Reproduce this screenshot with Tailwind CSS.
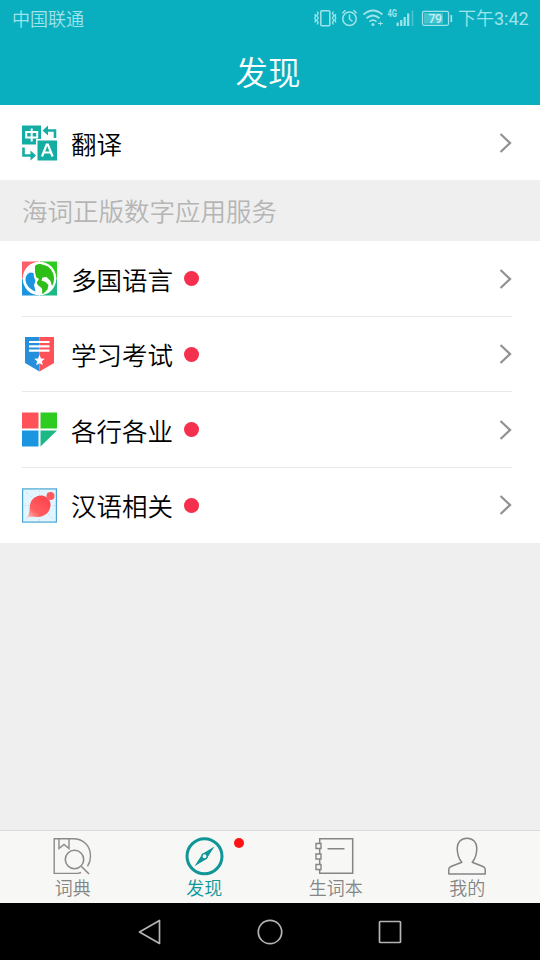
<!DOCTYPE html>
<html lang="zh-CN">
<head>
<meta charset="utf-8">
<title>发现</title>
<script src="https://cdn.jsdelivr.net/npm/@tailwindcss/browser@4"></script>
</head>
<body class="w-[540px] h-[960px] overflow-hidden flex flex-col bg-[#efefef] font-['Noto_Sans_CJK_SC',sans-serif] font-[350] text-black">
<header class="h-[105px] shrink-0 bg-[#09afbf] flex flex-col">
  <div class="h-[37px] flex items-center justify-between pl-3 pr-3 text-[#a1e3ea]">
    <span class="text-[18px] leading-[34px] pb-[2px]">中国联通</span>
    <div class="flex items-center">
      <svg class="w-[142px] h-[37px] mr-[2px]" viewBox="0 0 142 37" fill="none" stroke="currentColor" stroke-width="1.5">
        <rect x="6.8" y="10.800" width="9" height="15" rx="1"/>
        <path d="M3.200 11.500l1 2-1.500 2 1.500 2.500-1.500 2.500 1.500 2-1 2M.8 14l.8 2-.8 2 .8 2-.8 2.500M19.400 11.500l-1 2 1.500 2-1.500 2.500 1.500 2.500-1.500 2 1 2M21.800 14l-.8 2 .8 2-.8 2 .8 2.500" stroke-width="1.300"/>
        <circle cx="35.500" cy="18.800" r="6.700"/><path d="M35.500 14.500v4.500l3 2.500M28.300 13.200l3.200-3M42.700 13.200l-3.200-3"/>
        <path d="M49.500 14.500q9.500-8 19 0M52.500 18.200q6.500-5.500 13 0M55.500 21.600q3.500-3 7 0" stroke-width="1.800"/>
        <circle cx="59" cy="24.500" r="1.500" fill="currentColor" stroke="none"/>
        <path d="M64 23.500h4.800M66.400 21.500v4" stroke-width="1"/>
        <text x="73.500" y="17" textLength="9.500" lengthAdjust="spacingAndGlyphs" font-family="Roboto" font-size="10" font-weight="700" fill="currentColor" stroke="none">4G</text>
        <path d="M83.700 22.500v3.500M87.200 20v6M90.700 17v9M94.200 13.500v12.500" stroke-width="2.200"/>
        <path d="M98.500 10.500v15.500" stroke-width="1.500" opacity=".45"/>
        <rect x="108.500" y="11.300" width="26" height="14" rx="1.500" stroke-width="1.200"/>
        <rect x="110" y="13" width="19" height="10.600" fill="currentColor" stroke="none" opacity=".4"/>
        <text x="114.500" y="23" textLength="13.500" font-family="Roboto" font-size="12.500" font-weight="500" fill="#c6f1f4" stroke="none">79</text>
        <path d="M137.300 15v7" stroke-width="1.700"/>
      </svg>
      <span class="text-[18px] leading-[34px] pb-[2px] whitespace-nowrap w-[70px]">下午<span class="font-[Roboto] font-normal">3:42</span></span>
    </div>
  </div>
  <h1 class="text-center text-white text-[32.500px] leading-[68px] pr-1">发现</h1>
</header>

<main class="flex-1 text-[25.500px]">
  <div class="h-[75px] bg-white flex items-center pl-[22px] pr-7">
    <svg class="w-[35px] h-[36px] mr-[14px]" viewBox="0 0 35 36">
      <path fill="#14ada4" d="M0 .5h19v13.500H14V19.500H0zM15.500 15.500H35V35.500H15.500z"/>
      <path d="M9.700 3.500v13M4.200 7h11v5.500h-11z" fill="none" stroke="#fff" stroke-width="2"/>
      <path d="M22.500 5.500h10.500v7.500M1.500 22.500v8h9" fill="none" stroke="#14ada4" stroke-width="2.600"/>
      <path fill="#14ada4" d="M20.500 5.500l5.500-5v10zM14 30.500l-5.500-5v10z"/>
      <path d="M20 31.500l4.700-12h1.200l4.700 12M21.800 27.500h7" fill="none" stroke="#fff" stroke-width="2.200"/>
    </svg>
    <span class="leading-[38px]">翻译</span>
    <svg class="w-3 h-5 ml-auto" viewBox="0 0 12 20" fill="none" stroke="#919191" stroke-width="2.300"><path d="M.5 1L10 10 .5 19"/></svg>
  </div>
  <h2 class="h-[61px] pl-[22px] leading-[60px] text-[#b5b5b5]">海词正版数字应用服务</h2>
  <div class="bg-white pl-[22px] pr-7 h-[302px]">
    <div class="h-[76px] flex items-center border-b border-[#e9e9e9]">
      <svg class="w-[35px] h-[35px] mr-[14px]" viewBox="0 0 35 35">
        <path fill="#ff5f68" d="M0 .5h17v17H0z"/><path fill="#2ecb20" d="M18 .5h17v17H18z"/><path fill="#1b95df" d="M0 18h17v16.500H0z"/><path fill="#1cb987" d="M18 18h17v16.500H18z"/>
        <circle cx="17.500" cy="17.500" r="16.800" fill="#fff"/>
        <path fill="#2dbf18" d="M13 5c2-2 5-2.500 7-1.500l5 1.500c4 2.500 7 7 7 12.500 0 3-.5 5-2 7.500l-1.500-5-4-4-4 .5-1 3 4 1.500 3 3-1 4.500-4 4-1 .5c-1-2 .5-4-1-6-2-2-5-3-4.500-6l2-3-3-2-1-5z"/>
        <path fill="#1b95df" d="M8 11.500l3.500.5.500 4 1.500 4-1.500 4 1.500 6.500C8 28.500 4 24 3.500 19c-.3-3.500 1.500-6 4.500-7.500z"/>
      </svg>
      <span class="leading-[38px]">多国语言</span><i class="size-[15px] rounded-full bg-[#f52f4e] ml-[11px]"></i>
      <svg class="w-3 h-5 ml-auto" viewBox="0 0 12 20" fill="none" stroke="#919191" stroke-width="2.300"><path d="M.5 1L10 10 .5 19"/></svg>
    </div>
    <div class="h-[75px] flex items-center border-b border-[#e9e9e9]">
      <svg class="w-[35px] h-[35px] mr-[14px]" viewBox="0 0 35 35">
        <path fill="#268fdb" d="M3 0h14.500v34.500L3 26z"/><path fill="#ff5158" d="M17.500 0H32v26l-14.500 8.500z"/>
        <path d="M7 5h20.500M7 9.300h20.500M7 13.600h20.500" stroke="#fff" stroke-width="2.200"/>
        <path fill="#fff" d="M17.500 17.800l1.500 3.600 3.800.4-2.900 2.500.9 3.900-3.300-2-3.300 2 .9-3.900-2.900-2.500 3.800-.4z"/>
      </svg>
      <span class="leading-[38px]">学习考试</span><i class="size-[15px] rounded-full bg-[#f52f4e] ml-[11px]"></i>
      <svg class="w-3 h-5 ml-auto" viewBox="0 0 12 20" fill="none" stroke="#919191" stroke-width="2.300"><path d="M.5 1L10 10 .5 19"/></svg>
    </div>
    <div class="h-[76px] flex items-center border-b border-[#e9e9e9]">
      <svg class="w-[35px] h-[35px] mr-[14px]" viewBox="0 0 35 35">
        <path fill="#ff5158" d="M0 .5h16.500v16H0z"/><path fill="#2ecb20" d="M18.500.5H35v16H18.500z"/><path fill="#1b95df" d="M0 18.500h16.500v16H0z"/><path fill="#1cb987" d="M18.500 18.500H35l-16.500 16z"/>
      </svg>
      <span class="leading-[38px]">各行各业</span><i class="size-[15px] rounded-full bg-[#f52f4e] ml-[11px]"></i>
      <svg class="w-3 h-5 ml-auto" viewBox="0 0 12 20" fill="none" stroke="#919191" stroke-width="2.300"><path d="M.5 1L10 10 .5 19"/></svg>
    </div>
    <div class="h-[74px] flex items-center">
      <svg class="w-[35px] h-[35px] mr-[14px]" viewBox="0 0 35 35">
        <defs><linearGradient id="comet" x1="0" y1="1" x2=".7" y2=".2"><stop offset="0" stop-color="#ffb7b4"/><stop offset=".4" stop-color="#ff5f61"/><stop offset="1" stop-color="#ff4950"/></linearGradient></defs>
        <rect x=".6" y=".9" width="33.800" height="33.200" fill="#e2f4fd" stroke="#4aa5d3" stroke-width="1.200"/>
        <path d="M17.500 1v32M1 17.500h33M4 4l27 27M4 31L31 4" stroke="#b9e0f2" stroke-width=".8" stroke-dasharray="3 2"/>
        <path fill="url(#comet)" d="M5.500 29c3-5 1.500-9 3-14 2-5.500 8-8.500 13.500-7 6 2 8 8 5.500 13.500-2 5-8 8-13 7.500-3-.3-6-.5-9 0z"/>
        <circle cx="28.500" cy="8" r="4" fill="#ff585d"/>
      </svg>
      <span class="leading-[38px]">汉语相关</span><i class="size-[15px] rounded-full bg-[#f52f4e] ml-[11px]"></i>
      <svg class="w-3 h-5 ml-auto" viewBox="0 0 12 20" fill="none" stroke="#919191" stroke-width="2.300"><path d="M.5 1L10 10 .5 19"/></svg>
    </div>
  </div>
</main>

<nav class="h-[73px] shrink-0 bg-[#f7f7f5] border-t border-[#d9d9d9] px-[7px] grid grid-cols-4 text-[18px] leading-[20px] text-[#858585]">
  <div class="flex flex-col items-center pt-[6px]">
    <svg class="w-10 h-10" viewBox="0 0 40 40" fill="none" stroke="#8b8b8b" stroke-width="1.400">
      <path d="M28 35.500l-3 .9H1.200V1.800H20c11 0 17.500 7.500 17.500 17.500 0 4-1 7-3 10M6 2v9.500l5-4 5 4V2"/>
      <circle cx="21.500" cy="22.500" r="9.200" stroke-width="1.600"/><path d="M28.500 29.500l7.500 7.500" stroke-width="1.600"/>
    </svg>
    <span>词典</span>
  </div>
  <div class="relative flex flex-col items-center pt-[6px] text-[#0e9698]">
    <svg class="w-10 h-10" viewBox="0 0 40 40" fill="none">
      <circle cx="20.500" cy="19.300" r="17.500" stroke="#109699" stroke-width="3"/>
      <path fill="#109699" d="M30.500 9.500L23 21.300l-4.500-4.500zM10.500 29.200l7.500-11.700 4.500 4.500z"/><circle cx="20.500" cy="19.300" r="2.600" fill="#f7f7f5" stroke="#109699" stroke-width="1.300"/>
    </svg>
    <span>发现</span>
    <i class="absolute size-[10px] rounded-full bg-[#fc1414] left-[95px] top-[7px]"></i>
  </div>
  <div class="flex flex-col items-center pt-[6px]">
    <svg class="w-10 h-10 overflow-visible" viewBox="0 0 40 40" fill="none" stroke="#858585" stroke-width="1.400">
      <path d="M3.700 1.800h33v34.500h-33zM11.500 11.800h17" stroke-width="1.500"/>
      <path fill="#f7f7f5" d="M0 6.500h5v5H0zM0 17h5v5H0zM0 27.500h5v5H0z"/>
    </svg>
    <span>生词本</span>
  </div>
  <div class="flex flex-col items-center pt-[6px]">
    <svg class="w-10 h-10" viewBox="0 0 40 40" fill="none" stroke="#858585" stroke-width="1.500" stroke-linejoin="round">
      <path d="M20 1.200c-6 0-9.800 4.300-9.800 9.800 0 6 1.300 10.500 4.600 14.200L4 29.500c-1.700.7-2.200 1.500-2.200 3v4.500h36.400v-4.500c0-1.500-.5-2.300-2.200-3l-10.800-4.300c3.300-3.700 4.600-8.200 4.600-14.200 0-5.500-3.800-9.800-9.800-9.800z"/>
    </svg>
    <span>我的</span>
  </div>
</nav>
<footer class="h-[57px] shrink-0 bg-black flex justify-center items-center gap-[80px]">
  <svg class="size-10" viewBox="0 0 40 40" fill="none" stroke="#b4b4b4" stroke-width="1.700" stroke-linejoin="round"><path d="M29.500 8.500v23L9.500 20z"/></svg>
  <svg class="size-10" viewBox="0 0 40 40" fill="none" stroke="#b4b4b4" stroke-width="1.700"><circle cx="20" cy="20" r="11.700"/></svg>
  <svg class="size-10" viewBox="0 0 40 40" fill="none" stroke="#b4b4b4" stroke-width="1.700"><rect x="9.500" y="9.500" width="21" height="21" rx=".8"/></svg>
</footer>
</body>
</html>
